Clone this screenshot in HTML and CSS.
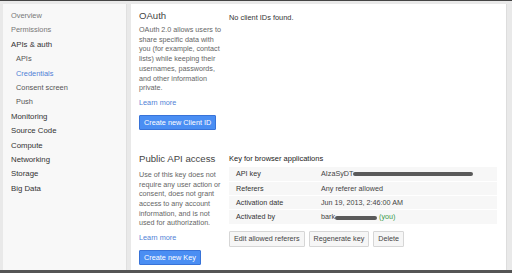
FILE: index.html
```html
<html>
    <head>
        <meta charset="UTF-8">
        <title>Credentials</title>
        <link rel="stylesheet" href="styles.css">
    </head>
    <body>
        <div class="frame">
            <div class="sidebar">
                <a class="nav light">Overview</a>
                <a class="nav light">Permissions</a>
                <a class="nav bold">APIs &amp; auth</a>
                <a class="nav sub">APIs</a>
                <a class="nav sub active">Credentials</a>
                <a class="nav sub">Consent screen</a>
                <a class="nav sub">Push</a>
                <a class="nav bold">Monitoring</a>
                <a class="nav bold">Source Code</a>
                <a class="nav bold">Compute</a>
                <a class="nav bold">Networking</a>
                <a class="nav bold">Storage</a>
                <a class="nav bold">Big Data</a>
            </div>
            <div class="main">
                <div class="section">
                    <div class="intro">
                        <div class="heading">OAuth</div>
                        <p class="desc">OAuth 2.0 allows users to share specific data with you (for example, contact lists) while keeping their usernames, passwords, and other information private.</p>
                        <a class="learn">Learn more</a>
                        <button class="btn-blue">Create new Client ID</button>
                    </div>
                    <div class="detail">
                        <div class="empty">No client IDs found.</div>
                    </div>
                </div>
                <div class="section second">
                    <div class="intro">
                        <div class="heading">Public API access</div>
                        <p class="desc">Use of this key does not require any user action or consent, does not grant access to any account information, and is not used for authorization.</p>
                        <a class="learn">Learn more</a>
                        <button class="btn-blue">Create new Key</button>
                    </div>
                    <div class="detail">
                        <div class="key-title">Key for browser applications</div>
                        <table class="keys">
                            <tr><td class="lbl">API key</td><td>AIzaSyDT<span class="redact long"></span></td></tr>
                            <tr><td class="lbl">Referers</td><td>Any referer allowed</td></tr>
                            <tr><td class="lbl">Activation date</td><td>Jun 19, 2013, 2:46:00 AM</td></tr>
                            <tr><td class="lbl">Activated by</td><td>bark<span class="redact short"></span> <span class="you">(you)</span></td></tr>
                        </table>
                        <div class="actions">
                            <button class="btn-grey">Edit allowed referers</button>
                            <button class="btn-grey">Regenerate key</button>
                            <button class="btn-grey">Delete</button>
                        </div>
                    </div>
                </div>
            </div>
        </div>
    </body>
</html>
```
FILE: styles.css
```css
html, body
{
    margin: 0;
    padding: 0;
    width: 512px;
    height: 273px;
    overflow: hidden;
    background-color: #e9e9e9;
    font-family: "Liberation Sans", Arial, sans-serif;
}

.frame
{
    display: flex;
    gap: 4px;
    height: 266px;
    padding: 3px 5px 0 3px;
    border-top: 1px solid #444444;
    border-bottom: 3px solid #555555;
}

.sidebar
{
    width: 123px;
    background-color: #f8f8f8;
    border-right: 1px solid #e0e0e0;
    padding-top: 5px;
    display: flex;
    flex-direction: column;
}

.nav
{
    display: block;
    height: 14.4px;
    line-height: 14.4px;
    padding-left: 8px;
    font-size: 7.4px;
    color: #555555;
}
.nav.light { color: #777777; }
.nav.bold { color: #333333; font-size: 7.8px; }
.nav.sub { padding-left: 13px; color: #555555; }
.nav.active { color: #4f7fd6; }

.main
{
    flex: 1;
    background-color: #ffffff;
    border-right: 1px solid #dddddd;
    padding: 6px 9px 0 8px;
}

.section
{
    display: flex;
    gap: 8px;
}
.section.second { margin-top: 23px; }
.section.second .desc { margin-top: 5px; }
.section.second .detail { padding-top: 1px; }

.intro
{
    width: 82px;
}

.heading
{
    font-size: 9.6px;
    color: #444444;
    line-height: 12px;
}

.desc
{
    margin: 3px 0 0 0;
    font-size: 7.2px;
    line-height: 9.7px;
    color: #666666;
}

.learn
{
    display: block;
    margin-top: 5px;
    font-size: 7.3px;
    color: #4f7fd6;
}

.btn-blue
{
    margin-top: 8px;
    height: 15px;
    padding: 0 4px;
    font-family: "Liberation Sans", Arial, sans-serif;
    font-size: 7.3px;
    color: #ffffff;
    white-space: nowrap;
    background-color: #4a8ef3;
    border: 1px solid #3873d8;
    border-radius: 1px;
}

.detail
{
    flex: 1;
    padding-top: 3px;
}

.empty
{
    font-size: 7.4px;
    color: #333333;
}

.key-title
{
    font-size: 7.5px;
    color: #222222;
    line-height: 10px;
}

.keys
{
    width: 100%;
    margin-top: 3px;
    border-collapse: collapse;
    font-size: 7.2px;
    color: #444444;
}
.keys td
{
    height: 14.3px;
    padding: 0;
    background-color: #f7f7f7;
    border-bottom: 1px solid #ffffff;
}
.keys td.lbl
{
    width: 85px;
    padding-left: 7px;
    color: #333333;
}

.redact
{
    display: inline-block;
    height: 4px;
    background-color: #5a5a5a;
    border-radius: 2px;
    vertical-align: middle;
}
.redact.long { width: 120px; }
.redact.short { width: 42px; }

.you { color: #3a9a4a; }

.actions
{
    display: flex;
    gap: 4px;
    margin-top: 6px;
}

.btn-grey
{
    height: 16px;
    padding: 0 4px;
    font-family: "Liberation Sans", Arial, sans-serif;
    font-size: 7.2px;
    color: #444444;
    background-color: #f6f6f6;
    border: 1px solid #d6d6d6;
    border-radius: 1px;
}
```
